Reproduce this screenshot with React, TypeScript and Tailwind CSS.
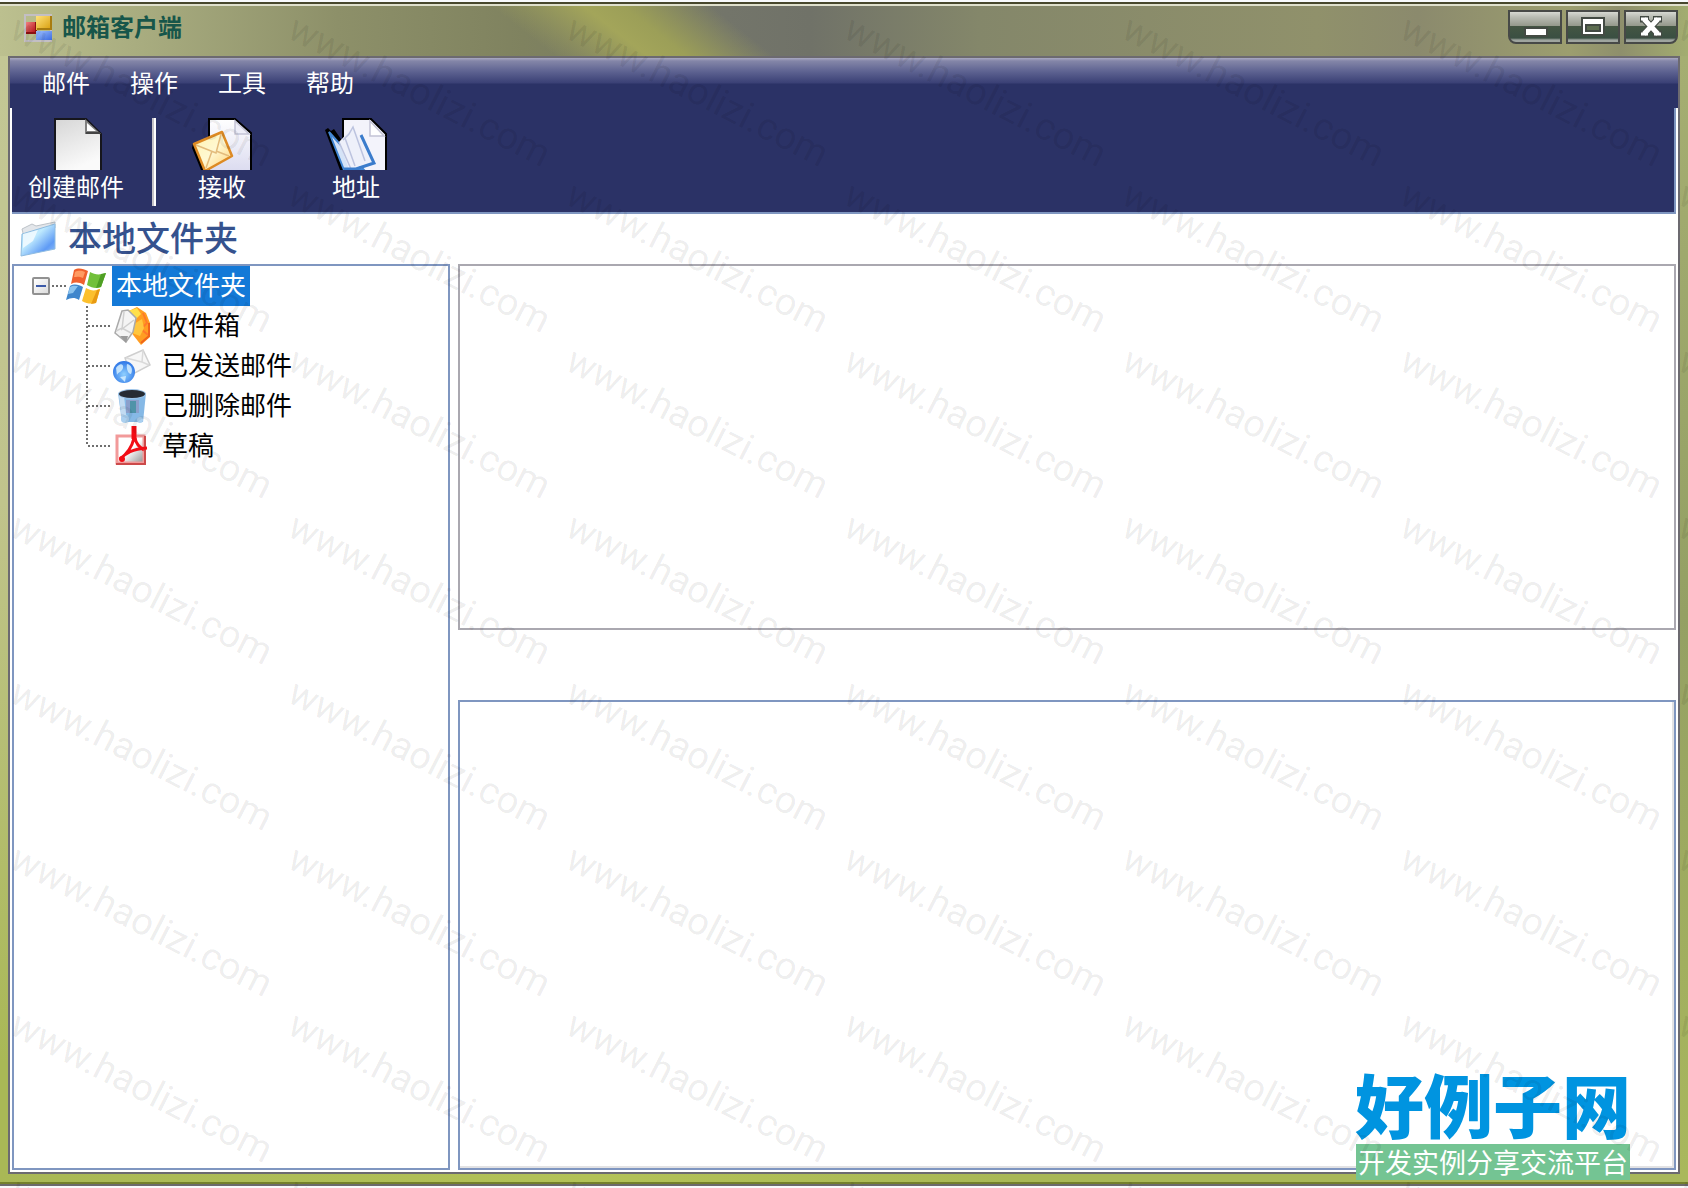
import React from "react";

const DOT_X = "bg-[repeating-linear-gradient(to_right,#6f6f6f_0_2px,transparent_2px_4px)]";
const DOT_Y = "bg-[repeating-linear-gradient(to_bottom,#6f6f6f_0_2px,transparent_2px_4px)]";

function AppLogo() {
  return (
    <svg width="28" height="28" viewBox="0 0 28 28" aria-hidden="true">
      <defs>
        <linearGradient id="lg-y" x1="0" y1="0" x2="1" y2="1">
          <stop offset="0" stopColor="#ffe27a" />
          <stop offset="1" stopColor="#d59a08" />
        </linearGradient>
        <linearGradient id="lg-r" x1="0" y1="0" x2="1" y2="1">
          <stop offset="0" stopColor="#f08080" />
          <stop offset="1" stopColor="#b00c10" />
        </linearGradient>
        <linearGradient id="lg-b" x1="0" y1="0" x2="1" y2="1">
          <stop offset="0" stopColor="#9fc2ff" />
          <stop offset="1" stopColor="#3a6ae0" />
        </linearGradient>
      </defs>
      <rect x="1" y="1" width="26" height="26" fill="none" stroke="#c3bfc4" strokeWidth="2" />
      <rect x="2" y="8" width="10" height="11" fill="url(#lg-r)" />
      <path d="M2 19h10V8" fill="none" stroke="#8c1012" strokeWidth="2" />
      <rect x="12" y="2" width="16" height="14" fill="url(#lg-y)" />
      <path d="M13 15h14V2" fill="none" stroke="#a87c10" strokeWidth="2" />
      <rect x="12" y="17" width="16" height="9" fill="url(#lg-b)" />
    </svg>
  );
}

function NewMailIcon() {
  return (
    <svg width="60" height="52" viewBox="0 0 60 52" aria-hidden="true">
      <defs>
        <linearGradient id="nm" x1="0" y1="0" x2="0.4" y2="1">
          <stop offset="0" stopColor="#d6d6d6" />
          <stop offset="1" stopColor="#fafafa" />
        </linearGradient>
      </defs>
      <path d="M9 52V1H40L55 16V52" fill="url(#nm)" stroke="#16161c" strokeWidth="2" />
      <path d="M39 1v15h16z" fill="#7f7f7f" />
      <path d="M41 5v8h9z" fill="#fff" />
      <path d="M40 15h14" stroke="#444" strokeWidth="2" />
    </svg>
  );
}

function ReceiveIcon() {
  return (
    <svg width="60" height="52" viewBox="0 0 60 52" aria-hidden="true">
      <defs>
        <linearGradient id="rp" x1="0" y1="0" x2="0" y2="1">
          <stop offset="0" stopColor="#fff" />
          <stop offset="1" stopColor="#dcdcf0" />
        </linearGradient>
        <linearGradient id="re" x1="0" y1="0" x2="1" y2="1">
          <stop offset="0" stopColor="#fff3b0" />
          <stop offset="0.5" stopColor="#fff8d2" />
          <stop offset="1" stopColor="#ffcf73" />
        </linearGradient>
      </defs>
      <path d="M17 52V1H43L59 15V52" fill="url(#rp)" stroke="#000" strokeWidth="2" />
      <path d="M43 3v13h14z" fill="#eeeef8" stroke="#c4c4d6" strokeWidth="1.5" />
      <path d="M1 25l13 27h-5L0 30z" fill="#000" />
      <path d="M2 26L30 14l10 24-27 15z" fill="url(#re)" stroke="#dd8a24" strokeWidth="2.5" strokeLinejoin="round" />
      <path d="M4 27l20 8 5-19M14 50l6-17M37 38l-13-5" fill="none" stroke="#e3bb7c" strokeWidth="1.5" />
    </svg>
  );
}

function AddressIcon() {
  return (
    <svg width="62" height="52" viewBox="0 0 62 52" aria-hidden="true">
      <path d="M18 52V1H46L61 16V52" fill="#f3f3fb" stroke="#000" strokeWidth="2" />
      <path d="M45 3v15h14z" fill="#fff" stroke="#c4c4d6" strokeWidth="1.5" />
      <path d="M0 12l3-2 3 3 3-2 9 13v28h-3z" fill="#000" />
      <path d="M4 14l15 38h20L13 24z" fill="#d5e3f7" stroke="#4387d4" strokeWidth="2" />
      <path d="M14 24l14-15 20 36-24 6z" fill="#eef0fa" />
      <path d="M14 24l12 27M18 22l6-6 4-7 12 34M20 20l10 28" fill="none" stroke="#bcc3df" strokeWidth="1.5" />
      <path d="M36 17l13 28-18 6H19" fill="none" stroke="#3b7ccc" strokeWidth="3" />
    </svg>
  );
}

function FolderIcon() {
  return (
    <svg width="36" height="36" viewBox="0 0 36 36" aria-hidden="true">
      <defs>
        <linearGradient id="fo" x1="0" y1="0" x2="1" y2="1">
          <stop offset="0" stopColor="#a6dcfb" />
          <stop offset="0.4" stopColor="#bfeafe" />
          <stop offset="0.75" stopColor="#5f9bf5" />
          <stop offset="1" stopColor="#9cc6f8" />
        </linearGradient>
      </defs>
      <path d="M2 8l10-5 4 2 19-4v6L4 16z" fill="#e3e6ea" stroke="#bcc2c8" />
      <path d="M2 13L35 3v25L1 35z" fill="url(#fo)" stroke="#8fbce0" />
      <path d="M3 13l15-4-5 11-10 7z" fill="#fff" opacity="0.7" />
    </svg>
  );
}

function WindowsIcon() {
  return (
    <svg width="40" height="36" viewBox="0 0 40 36" aria-hidden="true">
      <path d="M8 2c5-3 9-1 14 1l-4 14c-5-3-9-3-13-1z" fill="#f0602e" />
      <path d="M9 4c4-2 7-1 10 0l-2 6c-4-2-7-1-9-1z" fill="#ff9a62" />
      <path d="M24 4c5 3 10 3 16 1l-5 14c-5 2-9 1-14-2z" fill="#72c03a" />
      <path d="M35 6l5-1-5 14-5 1z" fill="#4f9f24" />
      <path d="M4 18c5-3 9-1 13 1l-4 13c-5-3-8-2-13 0z" fill="#3f86cc" />
      <path d="M4 19c3-2 6-1 8-1l-5 7-5 1z" fill="#8cc3ee" />
      <path d="M20 20c5 3 9 3 14 1l-4 14c-5 1-9 1-14-2z" fill="#fcc02e" />
      <path d="M31 22l3-1-4 14-5 1z" fill="#e89a12" />
    </svg>
  );
}

function InboxIcon() {
  return (
    <svg width="36" height="38" viewBox="0 0 36 38" aria-hidden="true">
      <path d="M15 4l8-4 9 6 4 10v14l-9 8-11-14z" fill="#ff9d22" />
      <path d="M14 4l9-3 4 6-5 5z" fill="#ffe04a" />
      <path d="M29 6l4 10-6 6 7 6" fill="none" stroke="#ff7a2a" strokeWidth="2" />
      <path d="M35 16v13l-8 7" fill="none" stroke="#f0641a" strokeWidth="2" />
      <path d="M20 17l8-5 2 9-4 8-8-3z" fill="#ffc63e" />
      <path d="M8 4l6-1 8 8-3 14-7 10L1 26z" fill="#f4f4f4" stroke="#aaa" strokeWidth="1.5" />
      <path d="M10 5L8 22l4-3 8-6M2 24l6-3 9 5" fill="none" stroke="#cfcfcf" strokeWidth="1.5" />
      <path d="M6 29l8 0-2 7z" fill="#9b9b9b" />
    </svg>
  );
}

function SentIcon() {
  return (
    <svg width="38" height="36" viewBox="0 0 38 36" aria-hidden="true">
      <defs>
        <radialGradient id="gl" cx="0.5" cy="0.6" r="0.6">
          <stop offset="0" stopColor="#8fd0ff" />
          <stop offset="1" stopColor="#2c74e6" />
        </radialGradient>
      </defs>
      <path d="M12 10L30 2l7 15-19 10z" fill="#f7f7f7" stroke="#cfcfcf" strokeWidth="1.5" />
      <path d="M13 10l16 4 1-12M29 14l7 3" fill="none" stroke="#dadada" strokeWidth="1.5" />
      <circle cx="11" cy="24" r="11" fill="url(#gl)" />
      <path d="M3 20c4-6 8-4 7 0s-5 4-6 7zM14 16c5 1 6 6 4 10-3 0-5-6-4-10zM7 29l6-1-1 6z" fill="#d5efff" opacity="0.85" />
    </svg>
  );
}

function TrashIcon() {
  return (
    <svg width="36" height="36" viewBox="0 0 36 36" aria-hidden="true">
      <path d="M4 5h28l-3 29H8z" fill="#86b9e6" />
      <path d="M5 8h5l3 26H8z" fill="#c2dbf2" />
      <rect x="12" y="12" width="13" height="13" fill="#8b9fcb" />
      <rect x="16" y="13" width="6" height="12" fill="#4f93a8" />
      <ellipse cx="18" cy="6" rx="14" ry="5" fill="#9fc4e8" />
      <ellipse cx="18" cy="6" rx="13" ry="4" fill="#262b33" />
      <circle cx="11" cy="31" r="4" fill="#abd0f0" />
      <circle cx="26" cy="32" r="3" fill="#abd0f0" />
    </svg>
  );
}

function DraftIcon() {
  return (
    <svg width="36" height="40" viewBox="0 0 36 40" aria-hidden="true">
      <defs>
        <linearGradient id="pd" x1="0" y1="0" x2="1" y2="1">
          <stop offset="0.5" stopColor="#fff" />
          <stop offset="1" stopColor="#8f8f8f" />
        </linearGradient>
      </defs>
      <rect x="3" y="10" width="27" height="27" fill="url(#pd)" stroke="#f29a9a" strokeWidth="3" />
      <path d="M2 38h29V10" fill="none" stroke="#cc4a4a" strokeWidth="2" />
      <path d="M20 12c-2 9-6 15-14 21M6 33c6-6 12-10 27-11M21 12c1 6 4 9 9 12" fill="none" stroke="#f20d16" strokeWidth="3" />
      <path d="M20 0v13" stroke="#f20d16" strokeWidth="5" />
      <circle cx="8" cy="33" r="3" fill="#f20d16" />
    </svg>
  );
}

const WINDOW_BUTTON =
  "flex h-[34px] w-[54px] items-center justify-center border-2 border-[#474947] bg-[linear-gradient(to_bottom,#d6d8d2_0,#b9bcb3_5px,#94988b_14px,#445643_14px,#3a4f42_26px,#9fa59f_28px)]";

function TitleBar() {
  return (
    <header className="relative h-[50px] overflow-hidden bg-[linear-gradient(to_right,#bcc08f_0,#a9ad80_8%,#8d9069_20%,#7f825f_31%,#73756a_43%,#707268_48%,#84876a_58%,#90916b_78%,#8b8a6d_84%,#9c9e6f_93%,#8e8f6c_96%,#a3ad70_100%)]">
      <div className="absolute inset-y-0 left-[31%] w-[220px] skew-x-[52deg] bg-[linear-gradient(to_right,transparent,#a3a55a_42%,#9c9f58_60%,transparent)]" />
      <div className="relative flex items-start justify-between pt-1 pr-[10px] pl-6">
        <div className="flex items-center gap-[10px] pt-0.5">
          <AppLogo />
          <h1 className="text-2xl leading-7 font-bold text-[#17564a]">
            <span className="block h-8 leading-7">邮箱客户端</span>
          </h1>
        </div>
        <div className="flex gap-1">
          <button aria-label="最小化" className={`${WINDOW_BUTTON} rounded-bl-lg`}>
            <svg width="28" height="22" viewBox="0 0 28 22">
              <rect x="4" y="12" width="22" height="8" fill="#fff" stroke="#434a43" strokeWidth="2" />
            </svg>
          </button>
          <button aria-label="最大化" className={WINDOW_BUTTON}>
            <svg width="24" height="22" viewBox="0 0 24 22">
              <path d="M1 2h22v17H1z" fill="#fff" stroke="#434a43" strokeWidth="2" />
              <path d="M5 9h14v6H5z" fill="#5c6c50" stroke="#434a43" strokeWidth="2" />
            </svg>
          </button>
          <button aria-label="关闭" className={`${WINDOW_BUTTON} rounded-br-lg`}>
            <svg width="24" height="22" viewBox="0 0 24 22">
              <path d="M5 3l14 15M19 3L5 18M1 3h9M14 3h9M1 18h9M14 18h9" stroke="#434a43" strokeWidth="7" />
              <path d="M5 3l14 15M19 3L5 18" stroke="#fff" strokeWidth="5" />
              <path d="M2 3h7M15 3h7M2 18h7M15 18h7" stroke="#fff" strokeWidth="3" />
            </svg>
          </button>
        </div>
      </div>
    </header>
  );
}

function MenuBar() {
  return (
    <nav className="flex h-[50px] items-center gap-10 bg-[linear-gradient(to_bottom,#aaa9c2_0,#8486a8_3px,#5c6190_14px,#3a4075_25px,#2b3266_26px)] pb-0.5 pl-8 text-2xl text-white">
      {["邮件", "操作", "工具", "帮助"].map((label) => (
        <button key={label}>{label}</button>
      ))}
    </nav>
  );
}

function ToolButton({ icon, label }: { icon: React.ReactNode; label: string }) {
  return (
    <button className="flex w-24 flex-col items-center">
      {icon}
      <span className="text-2xl leading-8">{label}</span>
    </button>
  );
}

function ToolBar() {
  return (
    <div className="mx-0.5 flex h-[106px] items-start border-r-2 border-b-2 border-[#7f96c0] bg-[#2b3266] pt-[10px] pl-4 text-white">
      <ToolButton icon={<NewMailIcon />} label="创建邮件" />
      <div className="mr-[18px] ml-7 h-[88px] w-1 border-r-2 border-l-2 border-r-white border-l-[#c6c4c8]" />
      <div className="flex gap-[38px]">
        <ToolButton icon={<ReceiveIcon />} label="接收" />
        <ToolButton icon={<AddressIcon />} label="地址" />
      </div>
    </div>
  );
}

const FOLDERS = [
  { label: "收件箱", icon: <InboxIcon /> },
  { label: "已发送邮件", icon: <SentIcon /> },
  { label: "已删除邮件", icon: <TrashIcon /> },
  { label: "草稿", icon: <DraftIcon /> },
];

function FolderTree() {
  return (
    <aside className="w-[438px] shrink-0 border-2 border-[#7f96c0] text-[26px] leading-9 text-black">
      <div className="flex h-10 items-center pl-[18px]">
        <button
          aria-label="折叠"
          className="flex size-[18px] items-center justify-center rounded-xs border-2 border-[#919191] bg-[linear-gradient(135deg,#fff,#dcdcdc)]"
        >
          <span className="h-0.5 w-[10px] bg-[#3c5aa8]" />
        </button>
        <span className={`ml-0.5 h-0.5 w-[14px] ${DOT_X}`} />
        <WindowsIcon />
        <button className="ml-1.5 h-10 bg-[#1479d7] px-1 pb-1 text-white">本地文件夹</button>
      </div>
      <ul className="pl-[72px]">
        {FOLDERS.map((folder, i) => (
          <li key={folder.label} className="flex h-10 items-center">
            <span className={`w-0.5 self-start ${i === FOLDERS.length - 1 ? "h-5" : "h-10"} ${DOT_Y}`} />
            <span className={`h-0.5 w-6 ${DOT_X}`} />
            <span className="flex w-10 justify-center">{folder.icon}</span>
            <button className="ml-2.5 h-10 pb-1">{folder.label}</button>
          </li>
        ))}
      </ul>
    </aside>
  );
}

function Watermark() {
  return (
    <div
      aria-hidden="true"
      className="pointer-events-none absolute inset-0 grid auto-rows-[166px] grid-cols-[repeat(7,278px)] overflow-hidden"
    >
      {Array.from({ length: 56 }, (_, i) => (
        <div key={i} className="pt-1 pl-2">
          <span className="block w-max origin-[0_32px] rotate-[27deg] font-['Roboto'] text-[38px] leading-10 text-black/8">
            www.haolizi.com
          </span>
        </div>
      ))}
    </div>
  );
}

function SiteBadge() {
  return (
    <a
      href="#"
      className="absolute right-[57px] bottom-2 flex flex-col items-center text-center whitespace-nowrap"
    >
      <span className="h-[76px] text-[69px] leading-[70px] font-black text-[#0094e0]">好例子网</span>
      <span className="bg-[#74c493] px-0.5 text-[27px] leading-9 text-white">开发实例分享交流平台</span>
    </a>
  );
}

export default function App() {
  return (
    <div className="relative flex min-h-screen flex-col overflow-hidden bg-[#f8fafc] pt-0.5 pb-0.5 font-['Noto_Sans_CJK_SC',sans-serif]">
      <div className="flex grow flex-col border-t-2 border-b-2 border-t-[#47472c] border-b-[#6c6a6c] bg-[linear-gradient(to_bottom,#c3c795,#a9b856)]">
        <div className="h-0.5 bg-[#dfe0cc]" />
        <TitleBar />
        <div className="relative flex grow bg-[linear-gradient(to_bottom,#a5ae72_0,#94a064_50%,#a9b85c_100%)]">
          <div className="w-2 bg-[linear-gradient(to_bottom,#c3c795,#c0c48c_40%,#a9b856_90%)]" />
          <main className="flex grow flex-col border-2 border-[#6c6a70] bg-white">
            <MenuBar />
            <ToolBar />
            <div className="flex h-[50px] items-center gap-3 pl-[10px]">
              <FolderIcon />
              <h2 className="h-10 text-[34px] leading-9 font-medium text-[#35528e]">本地文件夹</h2>
            </div>
            <div className="flex grow gap-2 px-0.5 pb-0.5">
              <FolderTree />
              <div className="grid grow grid-rows-[366fr_470fr] gap-[70px]">
                <section aria-label="邮件列表" className="border-2 border-[#aaa8b0]" />
                <section aria-label="邮件内容" className="border-2 border-[#7f96c0]">
                  <div className="h-full border-r-2 border-b-2 border-[#e2e2e4]" />
                </section>
              </div>
            </div>
          </main>
          <div className="w-2" />
        </div>
        <div className="h-2 bg-[linear-gradient(to_right,#a9b856,#b3c257_35%,#a9b856_60%,#a9b85c)]" />
        <div className="h-0.5 bg-[#74802c]" />
      </div>
      <SiteBadge />
      <Watermark />
    </div>
  );
}
